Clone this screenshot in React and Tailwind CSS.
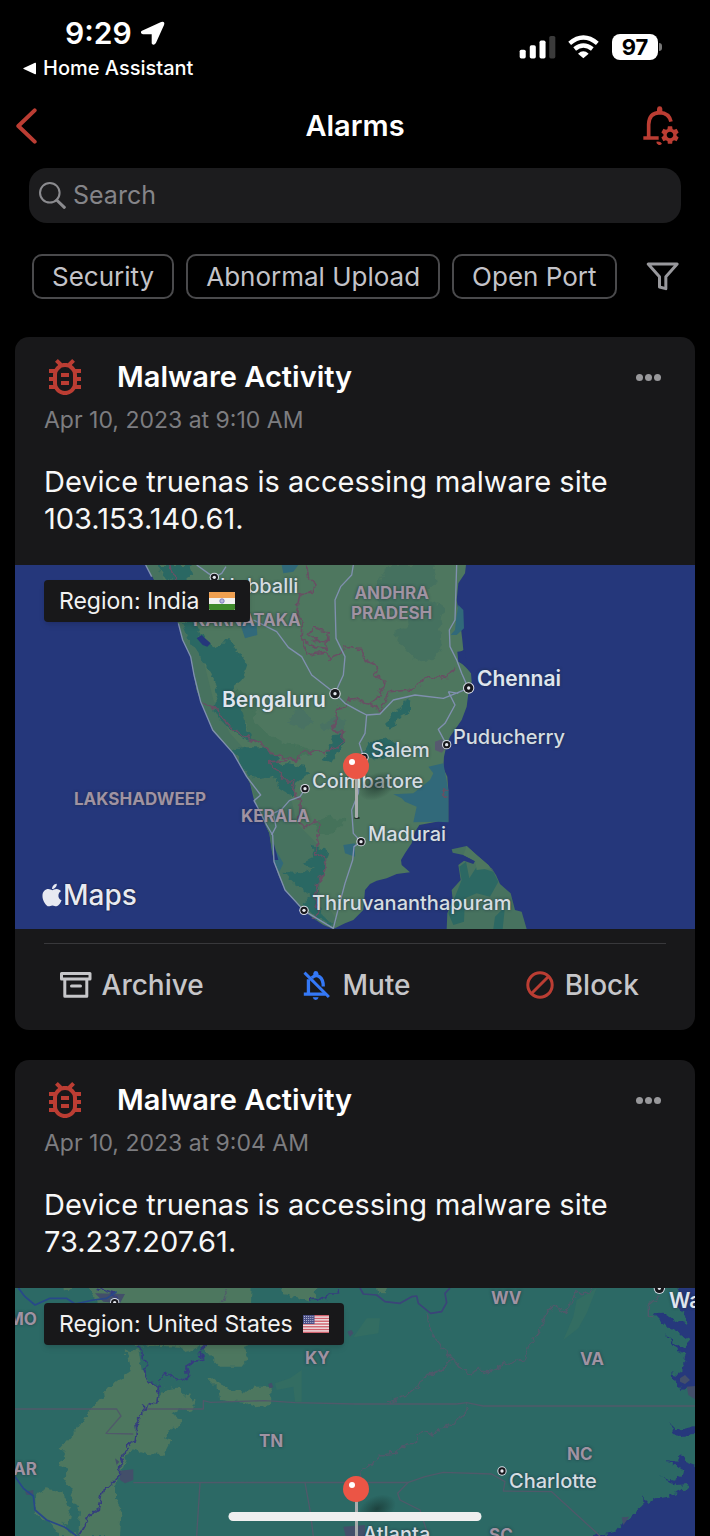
import { useState } from "react";
import { MdOutlineBugReport, MdSettings } from "react-icons/md";
import { FaApple } from "react-icons/fa";

const FILTERS = ["Security", "Abnormal Upload", "Open Port"];

const ALARMS = [
  { id: "a1", title: "Malware Activity", time: "Apr 10, 2023 at 9:10 AM", device: "truenas", ip: "103.153.140.61", region: "India" },
  { id: "a2", title: "Malware Activity", time: "Apr 10, 2023 at 9:04 AM", device: "truenas", ip: "73.237.207.61", region: "United States" },
];

const LABEL_STYLES = {
  major: "text-[21px] font-semibold text-[#dfe5ee]",
  city: "text-[20px] font-medium text-[#d5dde2]",
  state: "text-[17px] font-bold text-[#a093a2] text-center",
};

// x = left edge, y = middle of the label, both on the 680x364 map canvas
const INDIA_LABELS = [
  { text: "Hubballi", x: 205, y: 21, kind: "city" },
  { text: "KARNATAKA", x: 178, y: 55, kind: "state" },
  { text: "ANDHRA\nPRADESH", x: 336, y: 38, kind: "state" },
  { text: "Chennai", x: 462, y: 114, kind: "major" },
  { text: "Bengaluru", x: 207, y: 135, kind: "major" },
  { text: "Puducherry", x: 438, y: 172, kind: "city" },
  { text: "Salem", x: 356, y: 185, kind: "city" },
  { text: "Coimbatore", x: 297, y: 216, kind: "city" },
  { text: "LAKSHADWEEP", x: 59, y: 234, kind: "state" },
  { text: "KERALA", x: 226, y: 251, kind: "state" },
  { text: "Madurai", x: 353, y: 269, kind: "city" },
  { text: "Thiruvananthapuram", x: 297, y: 338, kind: "city" },
];

const US_LABELS = [
  { text: "MO", x: -7, y: 31, kind: "state" },
  { text: "WV", x: 476, y: 10, kind: "state" },
  { text: "Washington", x: 654, y: 13, kind: "major" },
  { text: "KY", x: 290, y: 70, kind: "state" },
  { text: "VA", x: 565, y: 71, kind: "state" },
  { text: "TN", x: 244, y: 153, kind: "state" },
  { text: "NC", x: 552, y: 166, kind: "state" },
  { text: "AR", x: -2, y: 181, kind: "state" },
  { text: "Charlotte", x: 494, y: 193, kind: "city" },
  { text: "Atlanta", x: 348, y: 246, kind: "city" },
  { text: "SC", x: 474, y: 247, kind: "state" },
];

function CityDot({ x, y, r = 14 }) {
  return (
    <g>
      <circle cx={x} cy={y} r={r} fill="#d9dde6" />
      <circle cx={x} cy={y} r={r - 3} fill="#17171c" />
      <circle cx={x} cy={y} r="5" fill="#e6e8ee" />
    </g>
  );
}

// breaks up straight segments so borders and forests get a ragged edge
function RaggedFilter({ id }) {
  return (
    <filter id={id} x="-5%" y="-5%" width="110%" height="110%">
      <feTurbulence type="fractalNoise" baseFrequency="0.05" numOctaves="2" seed="4" result="noise" />
      <feDisplacementMap in="SourceGraphic" in2="noise" scale="24" xChannelSelector="R" yChannelSelector="G" />
    </filter>
  );
}

function IndiaMap() {
  return (
    <svg viewBox="45 15 2040 1092" preserveAspectRatio="xMidYMid slice" className="block w-full h-full" aria-hidden="true">
      <RaggedFilter id="raggedIndia" />
      <rect x="45" y="15" width="2040" height="1092" fill="#25377b" />
      {/* main land */}
      <path
        d="M437 15 460 55 490 120 535 190 548 240 572 290 580 335 590 390 605 430 625 480 640 515 670 545 705 585 735 640 750 670 762 720 785 770 808 820 815 870 822 905 835 945 855 990 880 1015 905 1048 940 1075 970 1095 1000 1107 1035 1090 1060 1080 1090 1050 1095 990 1110 972 1130 962 1160 955 1190 942 1230 937 1205 915 1203 900 1215 880 1235 850 1245 815 1258 795 1310 785 1325 780 1345 787 1345 760 1345 690 1342 650 1330 625 1332 590 1340 555 1350 530 1385 480 1400 440 1405 400 1415 365 1413 340 1400 325 1380 305 1375 280 1390 270 1387 240 1380 180 1370 120 1375 70 1395 40 1398 15Z"
        fill="#4e775f"
      />
      {/* greener low land along the west coast */}
      <path d="M437 15 460 55 490 120 535 190 548 240 572 290 580 335 590 390 605 430 640 515 705 585 750 670 785 770 808 820 822 905 855 990 905 1048 1000 1107 1010 1080 960 1000 960 860 890 790 870 700 780 620 690 520 640 420 610 300 560 215 500 100 480 15Z" fill="#47725f" />
      <g filter="url(#raggedIndia)">
        <path d="M470 15 570 15 580 45 550 65 500 60ZM545 190 580 180 605 230 640 262 662 255 678 233 705 260 742 315 725 360 697 385 738 425 732 490 745 520 775 545 740 540 700 515 650 470 640 450 655 410 645 365 620 320 592 275 565 238Z" fill="#2c6863" />
        <path d="M695 570 740 562 800 562 835 600 845 640 775 655 750 650 715 605ZM815 622 860 612 915 620 928 640 888 672 880 712 835 682 820 650ZM1000 522 1030 520 1032 560 992 608 970 600 988 560Z" fill="#2c6863" />
        <path d="M935 855 985 870 972 930 950 985 962 1060 1000 1098 950 1075 905 1030 935 1010 870 960 850 935 900 940 945 925 905 912 940 895Z" fill="#2c6863" />
        <path d="M700 385 770 420 760 480 800 520 850 545 945 570 890 600 820 585 750 530 720 440ZM940 790 985 770 1040 780 1000 820 960 825Z" fill="#44725a" />
        <path d="M860 490 900 440 940 490 905 505ZM960 500 1000 470 1040 480 1020 520Z" fill="#487264" />
        <path d="M1165 15 1300 15 1310 60 1270 110 1330 140 1320 190 1325 260 1300 300 1250 305 1210 260 1180 215 1230 200 1225 150 1150 150 1120 90Z" fill="#45715f" />
        <path d="M1160 500 1170 460 1205 440 1218 418 1230 425 1230 458 1190 480 1175 518ZM1090 580 1110 550 1160 530 1190 550 1175 590 1110 600Z" fill="#2c6863" />
      </g>
      <path d="M720 190 770 190 772 225 735 235ZM845 15 895 15 880 35 850 40ZM1352 225 1365 210 1368 180 1375 135 1390 150 1392 205 1370 225ZM1180 703 1240 700 1290 660 1300 640 1285 620 1330 610 1345 690 1345 787 1310 785 1240 787 1250 740 1215 725 1205 715ZM815 850 850 910 838 935 822 905ZM1030 855 1065 850 1065 890 1035 880Z" fill="#31697a" />
      <path d="M590 235 605 225 615 235 632 250 622 260 608 255ZM820 845 835 900 822 900ZM1372 275 1395 272 1402 320 1375 305Z" fill="#25377b" />
      <path d="M1305 545 1325 538 1340 560 1325 578 1305 570Z" fill="#57596f" />
      {/* island in the south east */}
      <path d="M1355 868 1400 858 1430 885 1465 915 1488 945 1500 972 1532 1000 1545 1050 1565 1055 1580 1107 1340 1107 1342 1060 1358 1020 1355 990 1382 960 1375 915 1392 902 1420 912 1425 903 1390 885 1358 878Z" fill="#47725f" />
      <path d="M1378 920 1398 905 1408 955 1430 920 1480 935 1495 965 1470 1010 1430 1000 1395 1015 1392 1085 1360 1095 1345 1060 1385 960ZM1480 1107 1485 1070 1515 1040 1508 1107Z" fill="#2c6863" />
      <path d="M1400 858 1430 885 1465 915 1488 945 1475 925 1430 930 1425 903 1390 885Z" fill="#4e775f" />
      {/* state borders */}
      <g fill="none" stroke="#685064" strokeWidth="5" strokeLinejoin="round" filter="url(#raggedIndia)">
        <path d="M510 15 525 60M600 425 640 440 665 470 700 510 745 535 780 550 830 590 895 600 905 575 985 572 1030 550 1028 515 990 512 1005 490 1010 445 1040 440 1045 418 1065 415 1100 430 1145 450 1165 395 1245 390 1275 350 1340 355 1368 320" />
        <path d="M895 600 812 605 815 622 848 640 845 660 885 660 878 690 902 720 895 790 920 800 945 782 960 800 945 880 980 905 965 950 945 985 955 1060 935 1078" />
        <path d="M920 15 925 50 945 70 940 100 900 100 890 150 910 190 905 235 940 260 980 265 985 215 940 200 925 225 950 245 990 240M905 235 922 285 980 275 990 295 1025 280 1035 262 1085 265 1095 300 1130 315 1125 345 1155 365 1135 420 1100 430" />
        <path d="M1345 690 1325 690 1328 702 1345 712" />
      </g>
      {/* highways */}
      <g fill="none" stroke="#8090b0" strokeWidth="4" strokeLinejoin="round">
        <path d="M437 15 455 50M535 190 548 240 572 290 582 345 602 425 638 510 700 580 740 650 782 705 762 722 785 765 800 795 818 825 822 905 855 990 912 1052 1000 1105 1015 1045 1035 970 1058 900 1062 860 1083 845" />
        <path d="M590 15 625 40 643 52 665 40 678 20M760 180 830 215 865 262 905 290 935 345 1005 400 1030 345 1035 290 1008 235 1005 120 1022 80 1055 45 1060 15" />
        <path d="M1005 400 1035 430 1080 455 1100 465 1140 462 1180 420 1245 405 1330 415 1405 385 1385 340 1370 300 1350 260 1348 210 1365 180 1370 15M1345 395 1365 435 1335 490 1315 508 1340 555M1345 395 1375 400M1100 465 1095 520 1078 550 1090 590 1080 640 1075 700 1055 750 1060 820 1083 845M915 688 900 710 868 722 845 748 820 760 828 800 815 825" />
      </g>
      <CityDot x={643} y={52} />
      <CityDot x={1005} y={401} r={17} />
      <CityDot x={1406} y={384} r={17} />
      <CityDot x={1340} y={554} />
      <CityDot x={1092} y={592} />
      <CityDot x={915} y={686} />
      <CityDot x={1083} y={845} />
      <CityDot x={912} y={1051} />
    </svg>
  );
}

function UsMap() {
  return (
    <svg viewBox="45 24 2040 1092" preserveAspectRatio="xMidYMid slice" className="block w-full h-full" aria-hidden="true">
      <RaggedFilter id="raggedUs" />
      <rect x="45" y="24" width="2040" height="1092" fill="#2c6965" />
      {/* plains */}
      <g fill="#4e775f" filter="url(#raggedUs)">
        <path d="M260 14 755 14 752 95 765 190 730 200 745 235 725 260 660 260 600 195 560 215 540 200 400 195 300 90ZM845 14 960 14 930 65 885 50 850 42ZM185 14 225 14 205 33Z" />
        <path d="M380 215 415 203 425 270 455 310 478 318 475 355 495 325 535 320 560 350 570 335 585 375 570 390 545 382 515 400 548 418 550 432 520 440 495 475 512 482 490 525 440 522 395 508 375 540 360 580 345 620 345 660 365 690 360 768 235 768 240 690 208 645 215 630 190 595 205 565 178 558 195 520 182 505 230 450 275 385 335 315 395 270Z" />
        <path d="M102 645 140 625 190 640 210 695 205 735 180 725 230 768 180 768 150 730 105 700ZM620 297 640 295 690 330 740 335 765 320 812 320 810 375 770 382 735 368 660 360 655 330Z" />
        <path d="M1130 14 1170 14 1155 40 1135 38Z" />
      </g>
      <path d="M825 310 870 295 905 270 905 365 885 365 880 320 830 330ZM1100 115 1140 115 1135 160 1060 172ZM1730 60 1790 24 1760 100 1735 145 1690 180 1720 110Z" fill="#336d62" />
      {/* towns */}
      <path d="M285 40 375 42 360 70 310 65ZM75 635 100 630 100 645 80 645ZM360 572 400 568 400 600 375 610 360 600ZM345 535 358 545 350 555ZM805 312 815 308 820 322 808 325ZM1042 155 1055 150 1060 160 1050 170ZM1030 740 1095 735 1095 790 1040 780Z" fill="#434f6a" />
      {/* sea */}
      <g fill="#25377b" filter="url(#raggedUs)">
        <path d="M2040 14 2095 14 2095 355 2060 325 2045 333 2010 280 2035 285 2055 250 2060 222 2040 220 1995 160 2025 190 2050 205 2072 180 2000 140 1960 100 1990 98 2030 125 2060 135 2055 110 2020 70Z" />
        <path d="M2015 430 2025 450 2060 445 2095 435 2095 460 2050 468 2015 465ZM1995 540 2030 545 2035 525 2050 528 2055 545 2095 560 2095 768 2095 1116 1720 1116 1780 768 1850 755 1870 730 1930 680 1930 645 1940 670 1965 655 2015 645 2060 625 2065 612 2030 615 1980 592 2020 602 2045 590 2050 570Z" />
        <path d="M1790 768 1850 755 1750 1116 1650 1116Z" />
      </g>
      <path d="M1865 712 1888 710 1870 735ZM2040 295 2055 285 2070 300 2055 312 2040 305ZM2060 320 2085 318 2085 358 2065 345Z" fill="#434f6a" />
      {/* state lines */}
      <g fill="none" stroke="#50596a" strokeWidth="4" strokeLinejoin="round">
        <path d="M45 387 350 387 363 408 318 460 400 462M430 387 610 387 610 362 632 367 795 362 885 368 1065 372 1370 372 1400 368 1450 378 2085 378" />
        <path d="M400 608 1225 607 1275 590 1330 577 1475 582 1515 605 1510 633 1655 635 1800 768M600 608 590 768M915 608 930 690 940 768M1225 607 1193 640 1200 660 1260 690 1285 768" />
        <g filter="url(#raggedUs)">
          <path d="M1078 607 1085 570 1110 560 1140 525 1185 520 1220 492 1245 490 1250 465 1280 450 1300 465 1345 435 1365 430 1400 390 1405 370M1160 368 1215 350 1255 320 1275 290 1330 265 1362 235 1375 260 1410 285 1440 265 1455 280 1500 260 1510 245 1530 250 1575 235 1585 200 1615 165 1635 110 1660 75 1700 100 1730 35 1750 45 1775 24" />
          <path d="M1280 100 1290 150 1330 210 1362 235M675 24 680 50 660 68M1975 50 1945 75 1945 108 1960 110" />
        </g>
      </g>
      {/* rivers */}
      <g fill="none" stroke="#343d7e" strokeWidth="5" strokeLinejoin="round">
        <path d="M290 24 350 45 345 60M410 195 428 212 430 235 440 255 430 275 445 305 470 312 478 320 470 372 448 368 440 390 428 378 428 405 408 425 410 450 405 485 378 500 375 525 360 548 358 585 335 612 305 640 298 688 265 708 255 735 235 768M475 305 495 280 555 302 565 290 555 260 580 245 608 240 600 215 620 195M932 65 935 52 975 58 990 42 1015 42 1015 24" filter="url(#raggedUs)" />
        <path d="M45 590 70 625 100 648 105 690 140 720 195 742 230 768M55 24 75 50 105 75 150 55 200 55 225 72 280 60 320 55 350 35" stroke="#28488a" />
        <path d="M1080 24 1090 42 1130 45 1155 65 1200 70 1235 50 1250 48 1255 70 1292 100 1325 95 1340 68 1335 40 1350 24" stroke="#3b4479" />
      </g>
      <CityDot x={344} y={68} />
      <CityDot x={1978} y={25} r={17} />
      <CityDot x={1506} y={573} />
    </svg>
  );
}

function Pin() {
  return (
    <svg viewBox="0 0 90 72" className="absolute left-1/2 top-[186px] -translate-x-[14px] w-[90px] h-[72px]" aria-hidden="true">
      <defs>
        <radialGradient id="pinShade">
          <stop offset="0" stopColor="#10231f" stopOpacity="0.55" />
          <stop offset="1" stopColor="#10231f" stopOpacity="0" />
        </radialGradient>
      </defs>
      <ellipse cx="36" cy="35" rx="20" ry="13" fill="url(#pinShade)" transform="rotate(-25 36 35)" />
      <ellipse cx="16" cy="67" rx="3" ry="1" fill="#222d27" />
      <rect x="14" y="24" width="3" height="43" rx="1" fill="#a9acad" />
      <circle cx="15" cy="15" r="13" fill="#eb5545" />
      <circle cx="11" cy="11" r="3" fill="#fff" />
    </svg>
  );
}

function IndiaFlag() {
  return (
    <svg viewBox="0 0 26 18" className="w-[26px] h-[18px]" role="img" aria-label="India flag">
      <rect width="26" height="18" rx="1" fill="#f2f2f2" />
      <path d="M1 0h24l1 1v5H0V1z" fill="#f0a050" />
      <path d="M0 12h26v5l-1 1H1l-1-1z" fill="#3f8a2c" />
      <circle cx="13" cy="9" r="2.2" fill="#b9b9dc" stroke="#6a6ab5" strokeWidth="0.8" />
    </svg>
  );
}

function UsFlag() {
  return (
    <svg viewBox="0 0 26 18" className="w-[26px] h-[18px]" role="img" aria-label="United States flag">
      <rect width="26" height="18" rx="1" fill="#efe4e6" />
      {[0, 1, 2, 3, 4, 5, 6].map((i) => (
        <rect key={i} y={i * 2.77} width="26" height="1.38" fill="#d0606c" />
      ))}
      <rect width="11.5" height="9" fill="#4a4f86" />
      {[1.5, 3.5, 5.5, 7.5].map((y) =>
        [1.5, 3.6, 5.7, 7.8, 9.9].map((x) => <circle key={`${x}-${y}`} cx={x} cy={y} r="0.5" fill="#dcdcec" />)
      )}
    </svg>
  );
}

function RegionMap({ region }) {
  const india = region === "India";
  const labels = india ? INDIA_LABELS : US_LABELS;
  return (
    <div className="relative h-[364px] overflow-hidden">
      {india ? <IndiaMap /> : <UsMap />}
      <div className="absolute inset-y-0 left-1/2 w-[680px] -translate-x-1/2">
        {labels.map((l) => (
          <span
            key={l.text}
            className={`absolute -translate-y-1/2 whitespace-pre leading-5 [text-shadow:0_0_3px_#1c2a3acc] ${LABEL_STYLES[l.kind]}`}
            style={{ left: l.x, top: l.y }}
          >
            {l.text}
          </span>
        ))}
      </div>
      <Pin />
      <div className="absolute left-[29px] top-[15px] h-[42px] px-[15px] rounded-[4px] bg-[#18181a] flex items-center gap-[10px] text-[23px] text-[#f2f2f2] shadow-md">
        Region: {region}
        {india ? <IndiaFlag /> : <UsFlag />}
      </div>
      <div className="absolute left-[26px] bottom-[18px] flex items-center text-[28px] leading-8 font-medium text-[#e8eaf2] [text-shadow:0_0_2px_#111]">
        <FaApple className="w-[22px] h-[26px]" />
        Maps
      </div>
    </div>
  );
}

function ArchiveIcon() {
  return (
    <svg viewBox="0 0 32 26" className="w-8 h-[26px]" fill="none" stroke="#c6c6c9" strokeWidth="3" strokeLinejoin="round" aria-hidden="true">
      <rect x="1.5" y="1.5" width="28.5" height="5.6" />
      <path d="M4.8 7.5V24.3H26.8V7.5M11.5 14H20.5" strokeLinecap="round" />
    </svg>
  );
}

function MuteIcon() {
  return (
    <svg viewBox="912 118 84 94" className="w-[28px] h-[31px]" fill="none" stroke="#3478f6" strokeWidth="10" aria-hidden="true">
      <path d="M928 146V188M914 191H980" />
      <path d="M938 142Q950 130 962 139Q973 147 973 168" />
      <path d="M943 128Q944 121 950 121Q957 121 958 128V138H943Z" fill="#3478f6" stroke="none" />
      <path d="M941 201H959Q957 209 950 209Q943 209 941 201Z" fill="#3478f6" stroke="none" />
      <path d="M916 126 990 200" strokeWidth="9" />
    </svg>
  );
}

function BlockIcon() {
  return (
    <svg viewBox="0 0 28 28" className="w-7 h-7" fill="none" stroke="#bb3d33" strokeWidth="3" aria-hidden="true">
      <circle cx="14" cy="14" r="12.2" />
      <path d="M5.5 22.5 22.5 5.5" />
    </svg>
  );
}

function AlarmCard({ alarm }) {
  return (
    <article className="rounded-[14px] bg-[#18181a] overflow-hidden shrink-0">
      <div className="px-[29px] pt-4 pb-[28px]">
        <div className="flex items-center h-12">
          <MdOutlineBugReport className="-ml-[3px] w-12 h-12 text-[#bb3d33]" />
          <h2 className="ml-[28px] text-[29px] font-semibold text-white">{alarm.title}</h2>
          <button type="button" aria-label="More" className="ml-auto mr-[5px] flex gap-[2px]">
            <span className="w-[7px] h-[7px] rounded-full bg-[#98989b]" />
            <span className="w-[7px] h-[7px] rounded-full bg-[#98989b]" />
            <span className="w-[7px] h-[7px] rounded-full bg-[#98989b]" />
          </button>
        </div>
        <p className="mt-1 text-[23px] leading-[30px] text-[#7d7d80]">{alarm.time}</p>
        <p className="mt-[28px] text-[29px] leading-[37px] text-[#f7f7f7]">
          Device {alarm.device} is accessing malware site {alarm.ip}.
        </p>
      </div>
      <RegionMap region={alarm.region} />
      <div className="mx-[29px] mt-[14px] border-t border-[#38383b]" />
      <div className="pl-1 pb-1 h-[86px] grid grid-cols-3 items-center justify-items-center text-[28px] font-medium text-[#c6c6c9]">
        <button type="button" className="flex items-center gap-[10px]">
          <ArchiveIcon />
          Archive
        </button>
        <button type="button" className="flex items-center gap-[11px]">
          <MuteIcon />
          Mute
        </button>
        <button type="button" className="flex items-center gap-[11px]">
          <BlockIcon />
          Block
        </button>
      </div>
    </article>
  );
}

function StatusBar() {
  return (
    <div className="h-[91px] pl-[23px] pr-[48px] flex justify-between text-white">
      <div className="pt-[15px]">
        <div className="pl-[42px] flex items-center gap-[9px] h-9 text-[30px] font-semibold">
          9:29
          <svg viewBox="420 62 74 72" className="w-6 h-6" fill="#fff" aria-hidden="true">
            <path d="M482 64Q495 60 491 73L466 129Q459 139 453 130V102H426Q414 97 423 91Z" />
          </svg>
        </div>
        <a href="#home-assistant" className="flex items-center gap-[7px] h-[34px] text-[20px] font-medium">
          <svg viewBox="0 0 14 14" className="w-[13px] h-[13px]" fill="#fff" aria-hidden="true">
            <path d="M13 .8Q14 .4 14 1.5V12.5Q14 13.6 13 13.2L.8 7.6Q-.2 7 .8 6.4Z" />
          </svg>
          Home Assistant
        </a>
      </div>
      <div className="pt-[34px] flex items-start">
        <svg viewBox="491 106 110 70" className="mt-[1px] w-[37px] h-[24px]" aria-hidden="true">
          <rect x="493" y="149" width="18" height="26" rx="5" fill="#fff" />
          <rect x="523" y="136" width="18" height="39" rx="5" fill="#fff" />
          <rect x="552" y="122" width="18" height="53" rx="5" fill="#fff" />
          <rect x="581" y="108" width="18" height="67" rx="5" fill="#3b3b3b" />
        </svg>
        <svg viewBox="639 106 93 70" className="ml-3 mt-[1px] w-[31px] h-[24px]" fill="none" stroke="#fff" strokeWidth="13" aria-hidden="true">
          <path d="M644 130Q685 95 727 130" />
          <path d="M659 147Q685 126 712 147" />
          <path d="M669 161Q685 147 701 161L685 175Z" fill="#fff" stroke="none" />
        </svg>
        <div className="ml-[13px] flex items-center gap-[1px]">
          <span className="w-[46px] h-[26px] rounded-[8px] bg-white text-black text-[22px] leading-[26px] font-bold text-center">97</span>
          <span className="w-[3px] h-2 rounded-r-full bg-[#777]" />
        </div>
      </div>
    </div>
  );
}

function App() {
  const [search, setSearch] = useState("");

  return (
    <div className="h-screen bg-black text-white flex flex-col overflow-hidden font-['Inter',sans-serif]">
      <StatusBar />

      <header className="h-[70px] shrink-0 px-4 grid grid-cols-3 items-center">
        <button type="button" aria-label="Back" className="justify-self-start">
          <svg viewBox="50 323 63 108" className="w-[21px] h-9" fill="none" stroke="#bb3d33" strokeWidth="12" strokeLinecap="round" strokeLinejoin="round" aria-hidden="true">
            <path d="M106 330 57 377 106 424" />
          </svg>
        </button>
        <h1 className="text-center text-[29px] font-semibold">Alarms</h1>
        <button type="button" aria-label="Alarm settings" className="relative justify-self-end mr-[14px]">
          <svg viewBox="862 317 111 120" className="w-[37px] h-10" fill="none" stroke="#bb3d33" strokeWidth="11" aria-hidden="true">
            <path d="M863 413H909M879 413V372Q880 338 912 337Q940 338 946 364" />
            <path d="M904 337V325Q905 318 912 318Q919 318 920 325V337Z" fill="#bb3d33" stroke="none" />
            <path d="M902 424Q914 422 919 430Q914 436 908 433Q902 430 902 424Z" fill="#bb3d33" stroke="none" />
          </svg>
          <MdSettings className="absolute -right-[1px] top-[18px] w-[22px] h-[22px] text-[#bb3d33]" />
        </button>
      </header>

      <label className="mt-[7px] mx-[29px] h-[55px] shrink-0 rounded-[18px] bg-[#1c1c1e] flex items-center px-[10px] gap-[7px]">
        <svg viewBox="118 67 80 80" className="w-[27px] h-[27px]" fill="none" stroke="#8b8b8f" strokeLinecap="round" aria-hidden="true">
          <circle cx="150" cy="99" r="29" strokeWidth="6" />
          <path d="M171 121 193 142" strokeWidth="9" />
        </svg>
        <input
          type="text"
          aria-label="Search"
          placeholder="Search"
          value={search}
          onChange={(e) => setSearch(e.target.value)}
          className="flex-1 bg-transparent text-[25px] text-white placeholder:text-[#858589] outline-none"
        />
      </label>

      <div className="mt-[31px] pl-8 pr-[31px] shrink-0 flex items-center gap-3">
        {FILTERS.map((f) => (
          <button key={f} type="button" className="h-[45px] px-[18px] rounded-[10px] border-2 border-[#4a4a4c] text-[26px] leading-[30px] text-[#c3c3c8] whitespace-nowrap">
            {f}
          </button>
        ))}
        <button type="button" aria-label="Filter" className="ml-auto">
          <svg viewBox="874 309 98 87" className="w-[33px] h-[29px]" fill="none" stroke="#98989c" strokeWidth="9" strokeLinejoin="round" aria-hidden="true">
            <path d="M880 315H967L933 353V389L914 384V353Z" />
          </svg>
        </button>
      </div>

      <main className="mt-[38px] px-[15px] flex-1 min-h-0 overflow-y-auto [scrollbar-width:none] flex flex-col gap-[30px]">
        {ALARMS.map((a) => (
          <AlarmCard key={a.id} alarm={a} />
        ))}
      </main>

      <div className="fixed bottom-[15px] left-1/2 -translate-x-1/2 w-[253px] h-[9px] rounded-full bg-[#efefef]" />
    </div>
  );
}

export default App;
